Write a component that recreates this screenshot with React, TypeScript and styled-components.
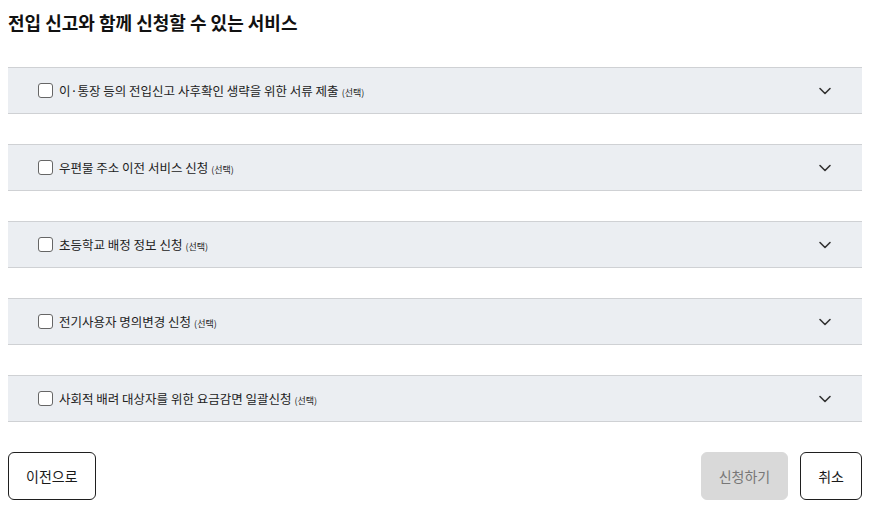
import styled, { createGlobalStyle } from "styled-components";

const GlobalStyle = createGlobalStyle`
    body {
        margin: 0;
        background: #fff;
        font-family: "Noto Sans CJK KR", "Noto Sans", sans-serif;
        color: #1a1a1a;
    }
`;

const Page = styled.main`
    width: 854px;
    padding: 8px 0 0 8px;
`;

const Title = styled.h2`
    margin: 0 0 31px 0;
    font-size: 18px;
    line-height: 28px;
    font-weight: 700;
    color: #111;
`;

const ServiceList = styled.ul`
    list-style: none;
    margin: 0;
    padding: 0;
    display: flex;
    flex-direction: column;
    gap: 30px;
`;

const ServiceItem = styled.li`
    display: flex;
    align-items: center;
    height: 45px;
    padding: 0 27px 0 30px;
    background: #ebeef2;
    border-top: 1px solid #cfd1d4;
    border-bottom: 1px solid #cfd1d4;
`;

const CheckLabel = styled.label`
    display: flex;
    align-items: center;
    gap: 6px;
    flex: 1;
    font-size: 12.5px;
    color: #222;
    cursor: pointer;
`;

const CheckBox = styled.span`
    width: 13px;
    height: 13px;
    border: 1.5px solid #666;
    border-radius: 3px;
    background: #fff;
    flex-shrink: 0;
`;

const Optional = styled.span`
    font-size: 9px;
    margin-left: 3px;
`;

const Toggle = styled.button`
    display: flex;
    align-items: center;
    justify-content: center;
    width: 20px;
    height: 20px;
    padding: 0;
    border: 0;
    background: none;
    color: #333;
`;

const Footer = styled.div`
    display: flex;
    align-items: center;
    gap: 12px;
    margin-top: 30px;
`;

const Spacer = styled.div`
    flex: 1;
`;

const Button = styled.button<{ $disabled?: boolean }>`
    height: 48px;
    padding: 0 17px;
    border-radius: 6px;
    font-family: inherit;
    font-size: 14px;
    border: ${(p) => (p.$disabled ? "1px solid #d9d9d9" : "1px solid #1f1f1f")};
    background: ${(p) => (p.$disabled ? "#d9d9d9" : "#fff")};
    color: ${(p) => (p.$disabled ? "#777" : "#1a1a1a")};
`;

const services = [
    "이·통장 등의 전입신고 사후확인 생략을 위한 서류 제출",
    "우편물 주소 이전 서비스 신청",
    "초등학교 배정 정보 신청",
    "전기사용자 명의변경 신청",
    "사회적 배려 대상자를 위한 요금감면 일괄신청",
];

function Chevron() {
    return (
        <svg width="14" height="14" viewBox="0 0 14 14" fill="none">
            <path d="M2 4.5 L7 9.5 L12 4.5" stroke="currentColor" strokeWidth="1.6" strokeLinecap="round" strokeLinejoin="round" />
        </svg>
    );
}

export default function App() {
    return (
        <Page>
            <GlobalStyle />
            <Title>전입 신고와 함께 신청할 수 있는 서비스</Title>
            <ServiceList>
                {services.map((name) => (
                    <ServiceItem key={name}>
                        <CheckLabel>
                            <CheckBox />
                            <span>
                                {name}
                                <Optional>(선택)</Optional>
                            </span>
                        </CheckLabel>
                        <Toggle aria-label="펼치기">
                            <Chevron />
                        </Toggle>
                    </ServiceItem>
                ))}
            </ServiceList>
            <Footer>
                <Button>이전으로</Button>
                <Spacer />
                <Button $disabled>신청하기</Button>
                <Button>취소</Button>
            </Footer>
        </Page>
    );
}
